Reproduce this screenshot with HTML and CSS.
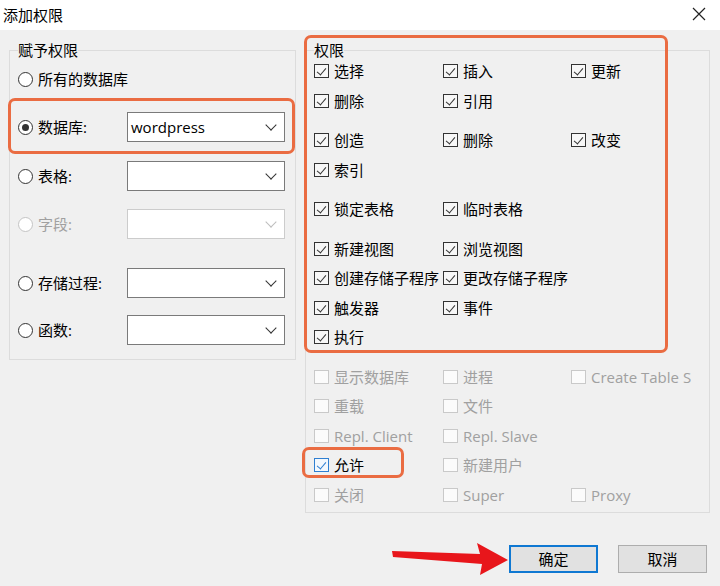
FILE: index.html
```html
<!DOCTYPE html>
<html lang="zh-CN">
<head>
    <meta charset="UTF-8">
    <meta name="viewport" content="width=device-width, initial-scale=1.0">
    <title>添加权限</title>
    <link rel="stylesheet" href="styles.css">
</head>
<body>
<div class="dialog">
    <div class="titlebar">
        <span class="title">添加权限</span>
        <svg class="close-icon" width="14" height="14" viewBox="0 0 14 14">
            <path d="M1 1 L13 13 M13 1 L1 13" stroke="#222" stroke-width="1.2" fill="none"/>
        </svg>
    </div>

    <div class="panes">
        <fieldset class="group grant-group">
            <legend>赋予权限</legend>
            <div class="opt-row">
                <span class="radio-label"><span class="radio"></span>所有的数据库</span>
            </div>
            <div class="opt-row">
                <span class="radio-label"><span class="radio checked"></span>数据库:</span>
                <div class="combo"><span class="combo-text">wordpress</span><span class="chevron"></span></div>
            </div>
            <div class="opt-row gap-19">
                <span class="radio-label"><span class="radio"></span>表格:</span>
                <div class="combo"><span class="combo-text"></span><span class="chevron"></span></div>
            </div>
            <div class="opt-row disabled">
                <span class="radio-label"><span class="radio"></span>字段:</span>
                <div class="combo"><span class="combo-text"></span><span class="chevron"></span></div>
            </div>
            <div class="opt-row gap-wide">
                <span class="radio-label"><span class="radio"></span>存储过程:</span>
                <div class="combo"><span class="combo-text"></span><span class="chevron"></span></div>
            </div>
            <div class="opt-row gap-17">
                <span class="radio-label"><span class="radio"></span>函数:</span>
                <div class="combo"><span class="combo-text"></span><span class="chevron"></span></div>
            </div>
        </fieldset>

        <fieldset class="group perm-group">
            <legend>权限</legend>
            <div class="perm-row">
                <span class="check-item"><span class="box checked"></span>选择</span>
                <span class="check-item"><span class="box checked"></span>插入</span>
                <span class="check-item"><span class="box checked"></span>更新</span>
            </div>
            <div class="perm-row">
                <span class="check-item"><span class="box checked"></span>删除</span>
                <span class="check-item"><span class="box checked"></span>引用</span>
            </div>
            <div class="perm-row section">
                <span class="check-item"><span class="box checked"></span>创造</span>
                <span class="check-item"><span class="box checked"></span>删除</span>
                <span class="check-item"><span class="box checked"></span>改变</span>
            </div>
            <div class="perm-row">
                <span class="check-item"><span class="box checked"></span>索引</span>
            </div>
            <div class="perm-row section">
                <span class="check-item"><span class="box checked"></span>锁定表格</span>
                <span class="check-item"><span class="box checked"></span>临时表格</span>
            </div>
            <div class="perm-row section">
                <span class="check-item"><span class="box checked"></span>新建视图</span>
                <span class="check-item"><span class="box checked"></span>浏览视图</span>
            </div>
            <div class="perm-row">
                <span class="check-item"><span class="box checked"></span>创建存储子程序</span>
                <span class="check-item"><span class="box checked"></span>更改存储子程序</span>
            </div>
            <div class="perm-row">
                <span class="check-item"><span class="box checked"></span>触发器</span>
                <span class="check-item"><span class="box checked"></span>事件</span>
            </div>
            <div class="perm-row">
                <span class="check-item"><span class="box checked"></span>执行</span>
            </div>
            <div class="perm-row section">
                <span class="check-item disabled"><span class="box"></span>显示数据库</span>
                <span class="check-item disabled"><span class="box"></span>进程</span>
                <span class="check-item disabled"><span class="box"></span>Create Table Space</span>
            </div>
            <div class="perm-row">
                <span class="check-item disabled"><span class="box"></span>重载</span>
                <span class="check-item disabled"><span class="box"></span>文件</span>
            </div>
            <div class="perm-row">
                <span class="check-item disabled"><span class="box"></span>Repl. Client</span>
                <span class="check-item disabled"><span class="box"></span>Repl. Slave</span>
            </div>
            <div class="perm-row">
                <span class="check-item"><span class="box checked focus"></span>允许</span>
                <span class="check-item disabled"><span class="box"></span>新建用户</span>
            </div>
            <div class="perm-row">
                <span class="check-item disabled"><span class="box"></span>关闭</span>
                <span class="check-item disabled"><span class="box"></span>Super</span>
                <span class="check-item disabled"><span class="box"></span>Proxy</span>
            </div>
        </fieldset>
    </div>

    <div class="actions">
        <button class="btn default">确定</button>
        <button class="btn">取消</button>
    </div>

    <!-- annotations drawn over the dialog -->
    <div class="mark mark-db"></div>
    <div class="mark mark-perm"></div>
    <div class="mark mark-grant"></div>
    <svg class="arrow" width="130" height="40" viewBox="0 0 130 40">
        <polygon points="2,10 90,13 87,2 118,19 90,34 92,23 3,16" fill="#e8161b"/>
    </svg>
</div>
</body>
</html>
```

FILE: styles.css
```css
body {
    margin: 0;
    background: #f0f0f0;
    font-family: "Open Sans", "Noto Sans CJK SC", sans-serif;
    font-size: 15px;
    color: #000;
}
.dialog {
    position: relative;
    width: 720px;
    height: 586px;
    overflow: hidden;
}
.titlebar {
    height: 30px;
    background: #fff;
    display: flex;
    align-items: center;
    justify-content: space-between;
    padding: 0 14px 0 3px;
    box-sizing: border-box;
}
.title {
    line-height: 20px;
    margin-top: -1px;
}
.close-icon {
    margin-top: -2px;
}
.panes {
    display: flex;
    align-items: flex-start;
    gap: 9px;
    padding: 10px 10px 0 9px;
}
.group {
    margin: 0;
    border: 1px solid #dcdcdc;
    box-sizing: border-box;
    min-width: 0;
}
.group legend {
    padding: 0;
    line-height: 20px;
    font-size: 15px;
}
.grant-group {
    width: 287px;
    padding: 4px 8px 14px 8px;
}
.perm-group {
    width: 405px;
    padding: 0 8px 6px 8px;
}

/* left side: radio rows */
.opt-row {
    display: flex;
    align-items: center;
    height: 30px;
}
.opt-row + .opt-row {
    margin-top: 18px;
}
.opt-row.gap-19 {
    margin-top: 19px;
}
.opt-row.gap-17 {
    margin-top: 17px;
}
.opt-row.gap-wide {
    margin-top: 29px;
}
.radio-label {
    width: 109px;
    display: flex;
    align-items: center;
    gap: 5px;
    line-height: 20px;
    white-space: nowrap;
}
.radio {
    width: 15px;
    height: 15px;
    box-sizing: border-box;
    border: 1px solid #333;
    border-radius: 50%;
    background: #fff;
    display: flex;
    align-items: center;
    justify-content: center;
    flex-shrink: 0;
}
.radio.checked::after {
    content: "";
    width: 7px;
    height: 7px;
    border-radius: 50%;
    background: #333;
}
.combo {
    width: 158px;
    height: 30px;
    box-sizing: border-box;
    border: 1px solid #7a7a7a;
    background: #fff;
    display: flex;
    align-items: center;
    justify-content: space-between;
    padding: 0 9px 0 3px;
}
.combo-text {
    font-size: 15px;
    line-height: 20px;
}
.chevron {
    width: 7px;
    height: 7px;
    border-right: 1px solid #333;
    border-bottom: 1px solid #333;
    transform: rotate(45deg);
    margin-top: -5px;
}
.opt-row.disabled .radio-label {
    color: #a0a0a0;
}
.opt-row.disabled .radio {
    border-color: #c4c4c4;
}
.opt-row.disabled .combo {
    border-color: #cccccc;
}
.opt-row.disabled .chevron {
    border-color: #bdbdbd;
}

/* right side: checkbox grid */
.perm-row {
    display: grid;
    grid-template-columns: 129px 128px 120px;
    height: 22px;
    align-items: center;
    margin-top: 7.5px;
}
.perm-row:first-of-type {
    margin-top: 0;
}
.perm-row.section {
    margin-top: 17.5px;
}
.check-item {
    display: flex;
    align-items: center;
    gap: 5px;
    line-height: 20px;
    white-space: nowrap;
    overflow: hidden;
}
.check-item.disabled {
    color: #a0a0a0;
}
.box {
    width: 15px;
    height: 14px;
    box-sizing: border-box;
    border: 1px solid #c9c9c9;
    background: #fbfbfb;
    flex-shrink: 0;
    position: relative;
}
.box.checked {
    border-color: #333;
    background: #f7f7f7;
}
.box.checked::after {
    content: "";
    position: absolute;
    left: 4px;
    top: 1px;
    width: 4px;
    height: 8px;
    border-right: 1.3px solid #333;
    border-bottom: 1.3px solid #333;
    transform: rotate(40deg);
}
.box.focus {
    border-color: #2f7fd1;
    background: #f3f8fd;
}
.box.focus::after {
    border-color: #2f7fd1;
}

/* buttons */
.actions {
    display: flex;
    justify-content: flex-end;
    gap: 20px;
    padding: 32px 13px 0 0;
}
.btn {
    width: 89px;
    height: 28px;
    background: #e1e1e1;
    border: 1px solid #adadad;
    font-family: inherit;
    font-size: 15px;
    color: #000;
    padding: 0;
}
.btn.default {
    border: 2px solid #0f78d2;
}

/* orange annotation frames */
.mark {
    position: absolute;
    border: 3px solid #ea6c42;
    border-radius: 7px;
    box-sizing: border-box;
}
.mark-db {
    left: 8px;
    top: 98px;
    width: 287px;
    height: 56px;
}
.mark-perm {
    left: 304px;
    top: 35px;
    width: 364px;
    height: 318px;
}
.mark-grant {
    left: 302px;
    top: 447px;
    width: 102px;
    height: 31px;
}
.arrow {
    position: absolute;
    left: 390px;
    top: 541px;
}
```
